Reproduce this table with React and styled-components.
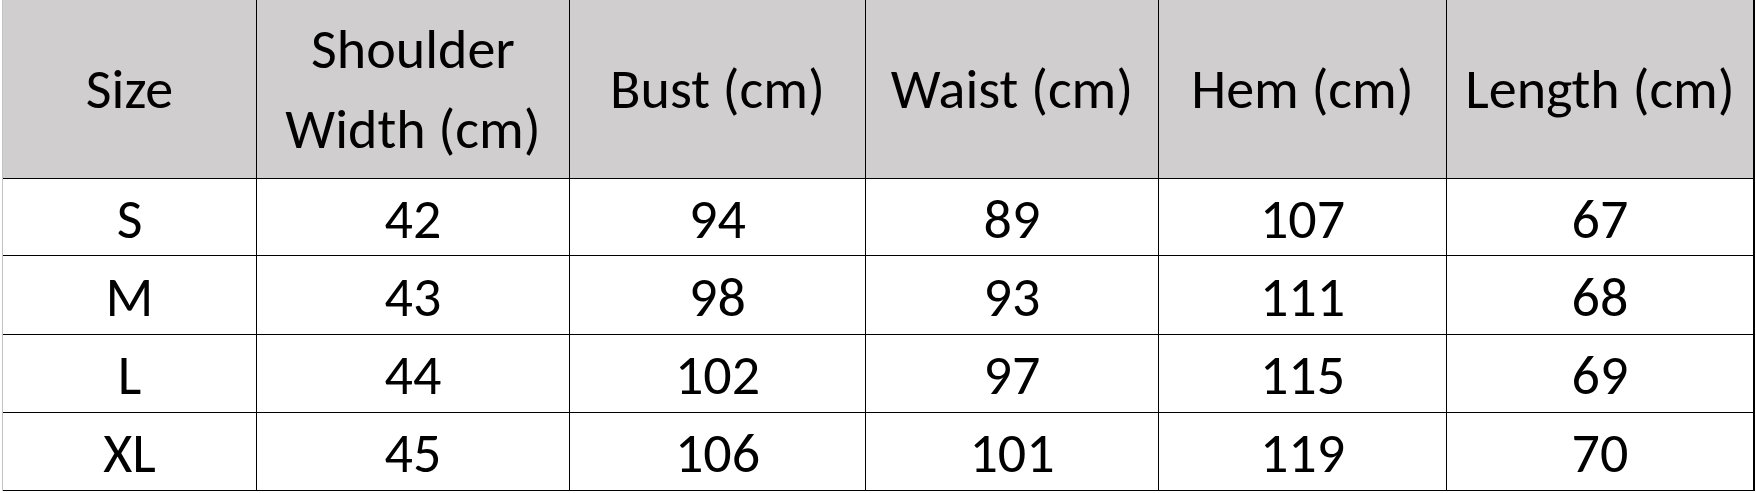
import React from "react";
import styled, { createGlobalStyle } from "styled-components";

const Global = createGlobalStyle`
  html, body { margin: 0; padding: 0; background: #ffffff; }
  body { width: 1756px; height: 493px; overflow: hidden; }
`;

const Page = styled.div`
  width: 1756px;
  height: 493px;
  padding-left: 2px;
  box-sizing: border-box;
  background: #ffffff;
`;

const Table = styled.div`
  display: grid;
  grid-template-columns: 254px 313px 296px 293px 288px 308px;
  grid-template-rows: 179px 77px 79px 78px 78px;
  border-left: 1px solid #c3c3c3;
  width: max-content;
  font-family: Carlito, "Open Sans", Lato, sans-serif;
  color: #000000;
`;

const Cell = styled.div`
  box-sizing: border-box;
  display: flex;
  align-items: center;
  justify-content: center;
  text-align: center;
  border-bottom: 1px solid #000000;
  border-right: ${(p) => (p.$last ? "2px" : "1px")} solid #000000;
  background: ${(p) => (p.$head ? "#d0cece" : "#ffffff")};
  font-size: 56px;
  line-height: 80px;
  padding-top: ${(p) => (p.$head ? "0" : "3px")};
  white-space: nowrap;
`;

const headers = [
  ["Size"],
  ["Shoulder", "Width (cm)"],
  ["Bust (cm)"],
  ["Waist (cm)"],
  ["Hem (cm)"],
  ["Length (cm)"],
];

const rows = [
  ["S", 42, 94, 89, 107, 67],
  ["M", 43, 98, 93, 111, 68],
  ["L", 44, 102, 97, 115, 69],
  ["XL", 45, 106, 101, 119, 70],
];

export default function App() {
  return (
    <Page>
      <Global />
      <Table>
        {headers.map((lines, i) => (
          <Cell key={"h" + i} $head $last={i === headers.length - 1}>
            <div>
              {lines.map((l) => (
                <div key={l}>{l}</div>
              ))}
            </div>
          </Cell>
        ))}
        {rows.map((r, ri) =>
          r.map((v, ci) => (
            <Cell key={ri + "-" + ci} $last={ci === r.length - 1}>
              {v}
            </Cell>
          ))
        )}
      </Table>
    </Page>
  );
}
